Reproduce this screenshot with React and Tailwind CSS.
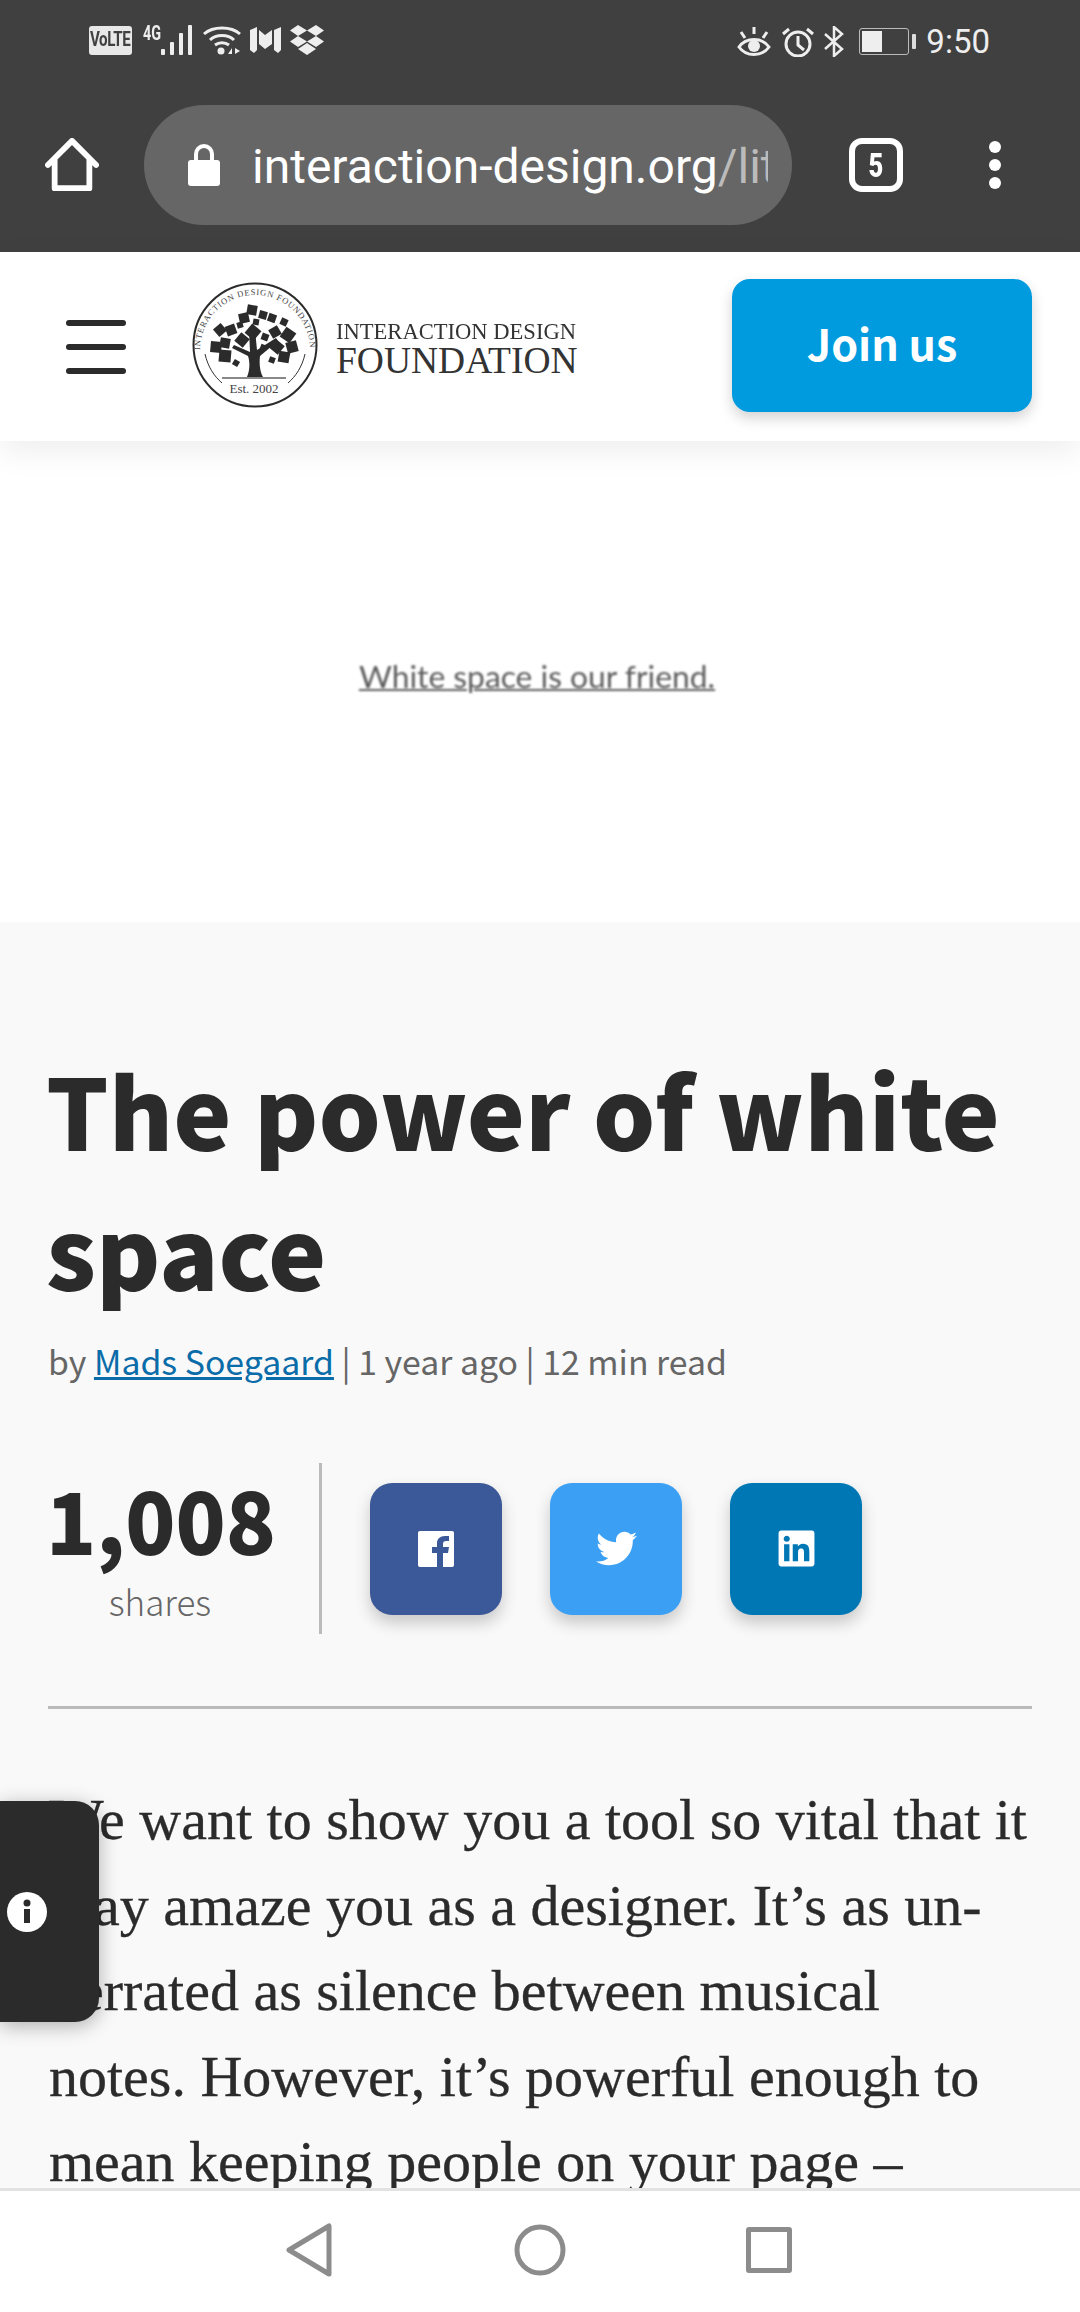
import { FaTwitter, FaLinkedin } from "react-icons/fa";

const sourceSans = "font-['Noto_Sans_CJK_SC','Noto_Sans',sans-serif]";

// tilted pages in the tree crown: center x, center y, size, angle
const pages = [
  [60, 28, 10, 10], [71, 33, 8, 15], [52, 36, 10, -12], [80, 36, 8, 20], [92, 40, 7, 25],
  [39, 48, 10, -20], [28, 48, 10, -40], [48, 43, 6, -15], [64, 40, 6, 10], [61, 50, 12, 40],
  [96, 53, 12, 35], [83, 50, 10, -30], [73, 55, 7, 20], [50, 58, 11, 40], [33, 61, 10, 10],
  [24, 65, 11, 5], [100, 65, 11, -15], [85, 65, 11, 40], [71, 65, 5, 20], [33, 74, 12, 5],
  [92, 75, 11, 10], [44, 81, 6, 30], [80, 78, 6, 20],
];

const lines = [
  "We want to show you a tool so vital that it",
  "may amaze you as a designer. It’s as un-",
  "derrated as silence between musical",
  "notes. However, it’s powerful enough to",
  "mean keeping people on your page –",
];

function StatusLeft() {
  return (
    <div className="flex items-center">
      <div className="ml-[89px] w-[43px] h-[29px] rounded-[3px] bg-[#e8e8e8] flex items-center justify-center overflow-hidden">
        <span className="text-[#404040] text-[21px] font-bold font-['Roboto',sans-serif] scale-x-[0.72] tracking-tight">VoLTE</span>
      </div>
      <span className="ml-[11px] w-[18px] -mt-[14px] text-[#eee] text-[20px] leading-none font-bold font-['Roboto',sans-serif] scale-x-[0.72] origin-left whitespace-nowrap">4G</span>
      <svg width="34" height="30" viewBox="0 0 34 30">
        <g fill="#eee">
          <rect x="0" y="24" width="4" height="6" rx="1" />
          <rect x="9" y="17" width="4" height="13" rx="1" />
          <rect x="18" y="8" width="4" height="22" rx="1" />
          <rect x="27" y="0" width="4" height="30" rx="1" />
        </g>
      </svg>
      <svg width="38" height="30" viewBox="0 0 38 30" className="ml-[8px]">
        <g fill="none" stroke="#eee" strokeWidth="3">
          <path d="M1 9C10 1 28 1 37 9" />
          <path d="M7 15C13 9 25 9 31 15" />
          <path d="M12 20C16 17 22 17 26 20" />
        </g>
        <circle cx="18" cy="26" r="3.500" fill="#eee" />
        <path d="M25 29l4-6v6zM32 23l5 3-5 3z" fill="#eee" />
      </svg>
      <svg width="31" height="26" viewBox="0 0 31 26" className="ml-[9px]">
        <path d="M0 3l7-3v23l-3 3-4-3zM9 3l6 5 7-5v14l-7 5-6-5zM24 3l7-3v23l-3 3-4-3z" fill="#eee" />
      </svg>
      <svg width="34" height="30" viewBox="0 0 34 30" className="ml-[9px]">
        <path d="M8 0l9 5.500-9 5.500-8-5.500zM26 0l8 5.500-8 5.500-9-5.500zM8 11l9 5.500-9 5.500-8-5.500zM26 11l8 5.500-8 5.500-9-5.500zM17 18l9 6-9 6-9-6z" fill="#eee" />
      </svg>
    </div>
  );
}

function StatusRight() {
  return (
    <div className="flex items-center">
      <svg width="34" height="30" viewBox="0 0 34 30">
        <path d="M2 20C9 10 25 10 32 20C25 30 9 30 2 20Z" fill="none" stroke="#eee" strokeWidth="3" />
        <circle cx="17" cy="19" r="6" fill="#eee" />
        <path d="M17 0v7M4 5l4 6M30 5l-4 6" stroke="#eee" strokeWidth="3" />
      </svg>
      <svg width="32" height="30" viewBox="0 0 32 30" className="ml-[11px]">
        <circle cx="16" cy="17" r="12" fill="none" stroke="#eee" strokeWidth="3" />
        <path d="M16 9v9l6 5" fill="none" stroke="#eee" strokeWidth="3" />
        <path d="M1 7l6-5M31 7l-6-5" stroke="#eee" strokeWidth="3" />
      </svg>
      <svg width="20" height="31" viewBox="0 0 20 31" className="ml-[10px]">
        <path d="M1 8l17 15-8 7V1l8 7L1 23" fill="none" stroke="#eee" strokeWidth="2.500" />
      </svg>
      <div className="ml-[15px] w-[50px] h-[27px] rounded-[3px] border border-[#bbb] p-[2px]">
        <div className="w-[20px] h-full bg-[#eee]" />
      </div>
      <div className="ml-[3px] w-[4px] h-[15px] rounded-[1px] bg-[#ddd]" />
      <span className="ml-[10px] text-[#eee] text-[33px] leading-none font-['Roboto',sans-serif]">9:50</span>
    </div>
  );
}

function BrowserBar() {
  return (
    <div className="shrink-0 h-[252px] bg-[#404040] flex flex-col">
      <div className="h-[80px] pt-[25px] pr-[90px] flex justify-between items-start">
        <StatusLeft />
        <StatusRight />
      </div>
      <div className="flex items-center h-[120px] mt-[25px]">
        <svg width="54" height="54" viewBox="0 0 56 56" className="ml-[45px]">
          <path d="M3 28L28 3L53 28M10 22V52H46V22" fill="none" stroke="#fff" strokeWidth="6" strokeLinecap="round" strokeLinejoin="round" />
        </svg>
        <div className="ml-[45px] w-[648px] h-[120px] rounded-full bg-[#666] flex items-center">
          <svg width="32" height="42" viewBox="0 0 32 42" className="ml-[44px]">
            <path d="M8 18V10a8 8 0 0 1 16 0V18" fill="none" stroke="#fff" strokeWidth="4" />
            <rect x="0" y="16" width="32" height="26" rx="3" fill="#fff" />
          </svg>
          <div className="ml-[32px] mt-[3px] w-[516px] overflow-hidden whitespace-nowrap text-[48px] leading-[60px] text-white font-['Roboto',sans-serif]">
            interaction-design.org<span className="text-[#bbb]">/lit</span>
          </div>
        </div>
        <div className="ml-[57px] w-[54px] h-[54px] rounded-[13px] border-[6px] border-white flex items-center justify-center">
          <span className="text-white text-[34px] leading-none font-black font-['Roboto',sans-serif] scale-x-[0.75]">5</span>
        </div>
        <div className="ml-[86px] flex flex-col gap-[6px]">
          <div className="w-[12px] h-[12px] rounded-full bg-white" />
          <div className="w-[12px] h-[12px] rounded-full bg-white" />
          <div className="w-[12px] h-[12px] rounded-full bg-white" />
        </div>
      </div>
    </div>
  );
}

function Logo() {
  return (
    <svg width="126" height="126" viewBox="0 0 126 126" className="ml-[66px] -mt-[3px]">
      <defs>
        <path id="ring" d="M8 68A55 55 0 1 1 118 68" />
      </defs>
      <circle cx="63" cy="63" r="61.500" fill="none" stroke="#2b2b2b" strokeWidth="2" />
      <text fontSize="8.500" fill="#444" fontFamily="'Liberation Serif', serif">
        <textPath href="#ring" textLength="170">INTERACTION DESIGN FOUNDATION</textPath>
      </text>
      <path d="M13 72C16 85 22 94 30 101M113 72C110 85 104 94 96 101" fill="none" stroke="#333" strokeWidth="1" />
      <path d="M55 95C58 88 58 80 56 74L40 66L42 63L58 70L57 48L63 48L65 68L84 56L86 59L68 74C67 82 68 90 71 95Z" fill="#2b2b2b" />
      {pages.map(([x, y, s, a], i) => (
        <rect key={i} x={x - s / 2} y={y - s / 2} width={s} height={s} fill="#2b2b2b" transform={`rotate(${a} ${x} ${y})`} />
      ))}
      <rect x="30" y="95" width="64" height="2" fill="#888" />
      <text x="62" y="111" textAnchor="middle" fontSize="13" fill="#444" fontFamily="'Liberation Serif', serif">Est. 2002</text>
    </svg>
  );
}

function SiteHeader() {
  return (
    <header className="shrink-0 relative z-10 h-[189px] bg-white flex items-center shadow-[0_10px_30px_rgba(0,0,0,0.07)]">
      <div className="ml-[66px] w-[60px] flex flex-col gap-[18px]">
        <div className="h-[6px] rounded-full bg-[#2b2b2b]" />
        <div className="h-[6px] rounded-full bg-[#2b2b2b]" />
        <div className="h-[6px] rounded-full bg-[#2b2b2b]" />
      </div>
      <Logo />
      <div className="ml-[18px] w-[240px] font-['Liberation_Serif',serif] text-[#333] flex flex-col">
        <span className="text-[24px] leading-[26px] mt-[3px] whitespace-nowrap scale-x-[0.94] origin-left">INTERACTION DESIGN</span>
        <span className="text-[37.500px] leading-[34px] whitespace-nowrap">FOUNDATION</span>
      </div>
      <div className={`ml-[156px] -mt-[3px] w-[300px] h-[133px] rounded-[18px] bg-[#009bdf] flex items-center justify-center shadow-[0_6px_14px_rgba(0,0,0,0.18)] text-white text-[43px] leading-none pb-[6px] font-bold ${sourceSans}`}>
        Join us
      </div>
    </header>
  );
}

function ShareButton({ color, children }) {
  return (
    <div className={`w-[132px] h-[132px] rounded-[22px] flex items-center justify-center text-white shadow-[0_8px_16px_rgba(0,0,0,0.2)] ${color}`}>
      {children}
    </div>
  );
}

function Article() {
  return (
    <div className="px-[48px] pt-[116px] bg-[#f9f9f9]">
      <h1 className={`-ml-[2px] text-[98px] leading-[140px] font-black text-[#2b2b2b] ${sourceSans}`}>
        The power of white space
      </h1>
      <p className={`mt-[18px] text-[33.800px] leading-[50px] text-[#666] ${sourceSans}`}>
        by <span className="text-[#0a6ca8] underline">Mads Soegaard</span> | 1 year ago | 12 min read
      </p>
      <div className="mt-[77px] flex items-center h-[171px]">
        <div className="w-[274px] h-full border-r-[3px] border-[#bbb] mr-[48px] flex flex-col">
          <span className={`-ml-[2px] mt-[11px] text-[86px] leading-[88px] font-black text-[#2b2b2b] scale-x-[0.96] origin-left ${sourceSans}`}>1,008</span>
          <span className={`mt-[17px] w-[224px] text-center text-[35px] leading-[44px] font-light text-[#666] ${sourceSans}`}>shares</span>
        </div>
        <div className="flex gap-[48px]">
          <ShareButton color="bg-[#3b5998]">
            <svg width="36" height="36" viewBox="0 0 36 36">
              <rect width="36" height="36" rx="2" fill="#fff" />
              <path d="M25 36V22h5l1-6h-6v-3c0-2 1-3 3-3h3V5h-4c-5 0-8 3-8 7v4h-5v6h5v14z" fill="#3b5998" />
            </svg>
          </ShareButton>
          <ShareButton color="bg-[#3b9ff3]"><FaTwitter size={41} /></ShareButton>
          <ShareButton color="bg-[#0077b5]"><FaLinkedin size={41} /></ShareButton>
        </div>
      </div>
      <div className="mt-[72px] h-[3px] bg-[#bbb]" />
      <div className="mt-[68px] ml-[1px] text-[58px] leading-[85.500px] text-[#2b2b2b] [-webkit-text-stroke:0.3px_#2b2b2b] font-['Liberation_Serif',serif] whitespace-nowrap">
        {lines.map((line) => (
          <div key={line}>{line}</div>
        ))}
      </div>
    </div>
  );
}

function NavBar() {
  return (
    <nav className="shrink-0 h-[124px] bg-white border-t-[3px] border-[#e2e2e2] flex items-center pb-[3px]">
      <svg width="48" height="54" viewBox="0 0 48 54" className="ml-[285px]">
        <path d="M4 27L44 3V51Z" fill="none" stroke="#8c8c8c" strokeWidth="5" strokeLinejoin="round" />
      </svg>
      <svg width="54" height="54" viewBox="0 0 54 54" className="ml-[180px]">
        <circle cx="27" cy="27" r="23" fill="none" stroke="#8c8c8c" strokeWidth="5" />
      </svg>
      <div className="ml-[179px] w-[46px] h-[46px] rounded-[3px] border-[5px] border-[#8c8c8c]" />
    </nav>
  );
}

export default function App() {
  return (
    <div className="relative w-[1080px] h-[2312px] overflow-hidden flex flex-col bg-[#f9f9f9]">
      <BrowserBar />
      <SiteHeader />
      <main className="flex-1 min-h-0 overflow-hidden">
        <div className="h-[481px] bg-white flex items-center justify-center pb-[10px] pr-[6px]">
          <span className="text-[31.800px] text-[#5c5c5c] underline decoration-2 font-['Lato',sans-serif] blur-[0.8px]">White space is our friend.</span>
        </div>
        <Article />
      </main>
      <NavBar />
      <div className="absolute left-0 top-[1801px] w-[99px] h-[221px] rounded-r-[24px] bg-[#2b2b2b] shadow-[0_4px_20px_rgba(0,0,0,0.3)] flex items-center">
        <svg width="40" height="40" viewBox="0 0 40 40" className="ml-[7px]">
          <circle cx="20" cy="20" r="20" fill="#fff" />
          <rect x="17" y="17" width="6" height="14" fill="#2b2b2b" />
          <circle cx="20" cy="11" r="3.500" fill="#2b2b2b" />
        </svg>
      </div>
    </div>
  );
}
